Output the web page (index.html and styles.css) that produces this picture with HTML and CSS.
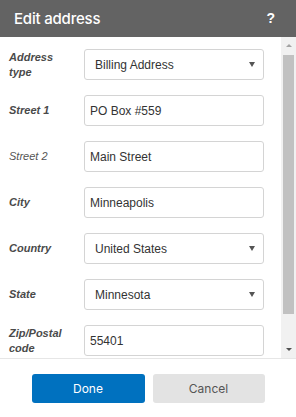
FILE: index.html
```html
<!DOCTYPE html>
<html>
<head>
	<meta charset="utf-8">
	<meta name="viewport" content="width=device-width, initial-scale=1">
	<title>Edit address</title>
	<link rel="stylesheet" href="styles.css">
</head>
<body>
	<div class="dialog">
		<div class="dialog-head">
			<span class="dialog-title">Edit address</span>
			<span class="help">?</span>
		</div>

		<div class="dialog-main">
			<div class="dialog-body">
				<div class="row">
					<label class="lbl">Address type</label>
					<div class="pick">
						<select class="field">
							<option>Billing Address</option>
						</select>
					</div>
				</div>
				<div class="row">
					<label class="lbl">Street 1</label>
					<input class="field" type="text" value="PO Box #559">
				</div>
				<div class="row">
					<label class="lbl plain">Street 2</label>
					<input class="field" type="text" value="Main Street">
				</div>
				<div class="row">
					<label class="lbl">City</label>
					<input class="field" type="text" value="Minneapolis">
				</div>
				<div class="row">
					<label class="lbl">Country</label>
					<div class="pick">
						<select class="field">
							<option>United States</option>
						</select>
					</div>
				</div>
				<div class="row">
					<label class="lbl">State</label>
					<div class="pick">
						<select class="field">
							<option>Minnesota</option>
						</select>
					</div>
				</div>
				<div class="row">
					<label class="lbl">Zip/Postal code</label>
					<input class="field" type="text" value="55401">
				</div>
			</div>

			<!-- scrollbar drawn by hand, the screenshot browser hides real ones -->
			<div class="scrollbar">
				<span class="sb-btn up"></span>
				<div class="sb-track"><span class="sb-thumb"></span></div>
				<span class="sb-btn down"></span>
			</div>
		</div>

		<div class="dialog-foot">
			<button class="btn done">Done</button>
			<button class="btn cancel">Cancel</button>
		</div>
	</div>
</body>
</html>
```

FILE: styles.css
```css
body{
	margin: 0px;
	padding: 0px;
	background: #fff;
	font-family: "Liberation Sans", Arial, sans-serif;
}

.dialog{
	width: 296px;
	height: 417px;
	display: flex;
	flex-direction: column;
}

.dialog-head{
	height: 37px;
	flex: none;
	background: #636363;
	color: #fff;
	display: flex;
	align-items: center;
	justify-content: space-between;
	padding: 0px 21px 1px 14px;
	box-sizing: border-box;
	font-family: Inter, sans-serif;
}

.dialog-title{
	font-size: 15px;
	font-weight: 500;
	letter-spacing: -0.2px;
}

.help{
	font-family: "Liberation Sans", sans-serif;
	font-weight: bold;
	font-size: 14px;
}

.dialog-main{
	height: 321px;
	flex: none;
	display: flex;
}

.dialog-body{
	width: 281px;
	flex: none;
	overflow: hidden;
	padding: 12px 17px 0px 9px;
	box-sizing: border-box;
}

.row{
	display: flex;
	align-items: center;
	margin-bottom: 15px;
}

.lbl{
	width: 75px;
	flex: none;
	font-size: 11px;
	line-height: 15px;
	font-weight: bold;
	font-style: italic;
	color: #4a4a4a;
	padding-right: 8px;
	box-sizing: border-box;
}

.lbl.plain{
	font-weight: normal;
	color: #555;
}

.field{
	width: 180px;
	height: 31px;
	box-sizing: border-box;
	border: 1px solid #d4d4d4;
	border-radius: 3px;
	background: #fff;
	color: #333;
	font-family: "Liberation Sans", Arial, sans-serif;
	font-size: 12px;
	padding: 0px 5px;
	margin: 0px;
	outline: none;
}

.pick{
	position: relative;
	width: 180px;
}

.pick select{
	appearance: none;
	-webkit-appearance: none;
	padding-left: 10px;
}

.pick:after{
	content: "";
	position: absolute;
	right: 9px;
	top: 13px;
	border-left: 3px solid transparent;
	border-right: 3px solid transparent;
	border-top: 5px solid #555;
	pointer-events: none;
}

.scrollbar{
	width: 15px;
	flex: none;
	background: #f1f1f1;
	display: flex;
	flex-direction: column;
}

.sb-btn{
	height: 17px;
	flex: none;
	display: flex;
	align-items: center;
	justify-content: center;
}

.sb-btn:before{
	content: "";
	border-left: 3px solid transparent;
	border-right: 3px solid transparent;
}

.sb-btn.up:before{
	border-bottom: 3px solid #a3a3a3;
}

.sb-btn.down:before{
	border-top: 3px solid #505050;
}

.sb-track{
	flex: 1;
	padding: 1px 2px 0px 2px;
}

.sb-thumb{
	display: block;
	height: 259px;
	background: #c1c1c1;
}

.dialog-foot{
	flex: 1;
	border-top: 1px solid #e6e6e6;
	display: flex;
	justify-content: center;
	align-items: flex-start;
	gap: 8px;
	padding-top: 15px;
}

.btn{
	width: 113px;
	height: 29px;
	border: none;
	border-radius: 3px;
	font-family: Inter, sans-serif;
	font-size: 12px;
}

.done{
	background: #0071bf;
	color: #fff;
}

.cancel{
	background: #e3e3e3;
	color: #555;
	width: 112px;
}
```
